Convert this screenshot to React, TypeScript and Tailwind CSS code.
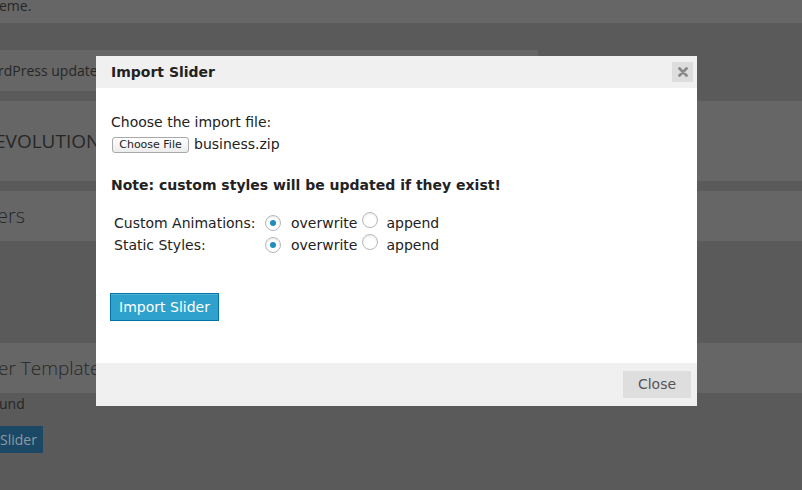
import React from "react";

function Radio({ checked }: { checked?: boolean }) {
  return (
    <span className="inline-flex h-[16px] w-[16px] shrink-0 items-center justify-center rounded-full border border-[#b4b9be] bg-white shadow-[inset_0_1px_2px_rgba(0,0,0,0.1)]">
      {checked && <span className="h-[6px] w-[6px] rounded-full bg-[#1e8cbe]" />}
    </span>
  );
}

function OptionRow({ label }: { label: string }) {
  return (
    <div className="flex h-[22px] items-center">
      <span className="w-[151px]">{label}</span>
      <Radio checked />
      <span className="ml-[10px]">overwrite</span>
      <span className="ml-[5px]">
        <Radio />
      </span>
      <span className="ml-[8px]">append</span>
    </div>
  );
}

export default function App() {
  return (
    <div className="relative h-[490px] w-[802px] overflow-hidden bg-[#5a5a5a] font-['Open_Sans',sans-serif] text-[#262626]">
      {/* dimmed admin page */}
      <div className="flex h-[23px] items-start bg-[#666] text-[14px] leading-[12px]">
        <span className="-ml-[1px]">eme.</span>
      </div>
      <div className="h-[27px]" />
      <div className="flex h-[41px] w-[538px] items-center bg-[#666] text-[14px]">
        <span className="-ml-[2px]">rdPress update</span>
      </div>
      <div className="h-[10px]" />
      <div className="flex h-[80px] items-center bg-[#666] text-[19px]">
        <span className="-ml-[5px]">EVOLUTION</span>
      </div>
      <div className="h-[10px]" />
      <div className="flex h-[50px] items-center bg-[#666] text-[20px] font-light">
        <span className="-ml-[3px]">ers</span>
      </div>
      <div className="h-[102px]" />
      <div className="flex h-[50px] items-center bg-[#666] text-[19px] font-light">
        <span className="-ml-[2px]">er Template</span>
      </div>
      <div className="flex h-[21px] items-center text-[14px]">
        <span className="-ml-[1px]">und</span>
      </div>
      <div className="mt-[12px] flex h-[27px] w-[43px] items-center bg-[#1b4864] text-[14px] text-[#8b9aa4]">
        <span>Slider</span>
      </div>

      {/* modal */}
      <div className="absolute left-[96px] top-[56px] flex h-[350px] w-[601px] flex-col bg-white font-['DejaVu_Sans',Verdana,sans-serif] text-[14px] text-[#222]">
        <div className="flex h-[32px] items-center justify-between bg-[#f0f0f0] pl-[15px] pr-[4px]">
          <span className="text-[14px] font-bold text-[#222]">Import Slider</span>
          <button className="flex h-[20px] w-[21px] items-center justify-center bg-[#dddddd]">
            <svg width="10" height="10" viewBox="0 0 10 10">
              <path d="M1.5 1.5 L8.5 8.5 M8.5 1.5 L1.5 8.5" stroke="#8a8a8a" strokeWidth="2.8" strokeLinecap="round" />
            </svg>
          </button>
        </div>
        <div className="flex-1 px-[15px] pt-[24px]">
          <div className="leading-[20px]">Choose the import file:</div>
          <div className="mt-[2px] flex items-center">
            <button className="ml-[1px] flex h-[16px] w-[77px] items-center justify-center rounded-[3px] border border-[#a9a9a9] bg-gradient-to-b from-white to-[#ececec] text-[11px] leading-none text-[#222]">
              Choose File
            </button>
            <span className="ml-[5px]">business.zip</span>
          </div>
          <div className="mt-[20px] font-bold leading-[20px]">Note: custom styles will be updated if they exist!</div>
          <div className="ml-[3px] mt-[17px]">
            <OptionRow label="Custom Animations:" />
            <OptionRow label="Static Styles:" />
          </div>
          <button className="-ml-[1px] mt-[37px] flex h-[28px] w-[109px] items-center justify-center border border-[#0074a2] bg-[#2ea2cc] text-[14px] text-white shadow-[inset_0_1px_0_rgba(120,200,230,0.5)]">
            Import Slider
          </button>
        </div>
        <div className="flex h-[43px] items-center justify-end bg-[#f0f0f0] pr-[6px]">
          <button className="h-[27px] w-[68px] bg-[#dedede] text-[14px] text-[#555]">Close</button>
        </div>
      </div>
    </div>
  );
}
